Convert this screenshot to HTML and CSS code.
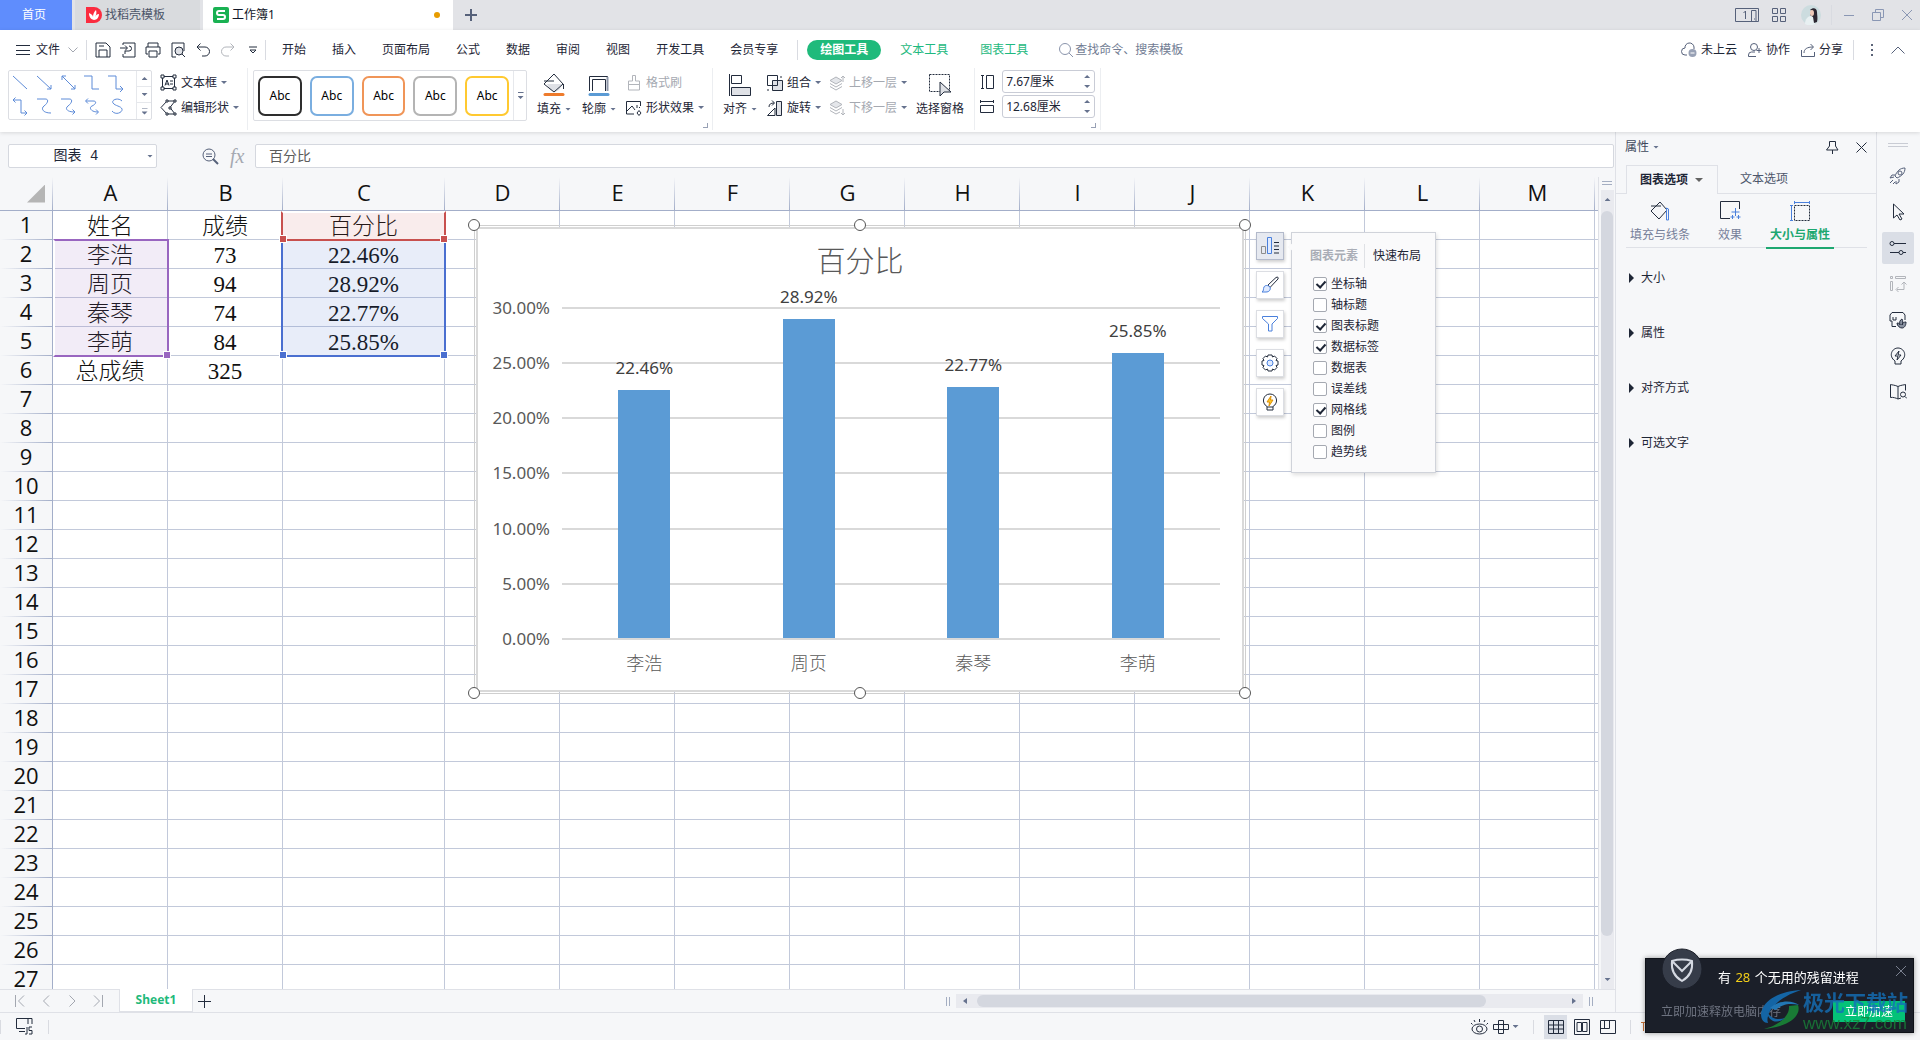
FILE: index.html
```html
<!DOCTYPE html>
<html lang="zh-CN">
<head>
<meta charset="utf-8">
<title>工作簿1</title>
<link rel="stylesheet" href="styles.css">
</head>
<body>
<header class="titlebar">
  <button class="home-tab">首页</button>
  <button class="doc-tab">
    <svg width="16" height="16" viewBox="0 0 16 16"><path d="M0 0h8a8 8 0 0 1 0 16H0z" fill="#fb2c3f"/><path d="M8 13C4 12 3 9 3 6c3 1 4 3 4 4 0-3 1-5 3-7 1 3 0 5-1 7 1-2 2-3 4-3 0 3-2 6-5 6z" fill="#fff"/></svg>
    找稻壳模板
  </button>
  <button class="doc-tab active">
    <svg width="16" height="16" viewBox="0 0 16 16"><rect width="16" height="16" rx="2" fill="#19b152"/><path d="M12 4H6a1.800 1.800 0 0 0 0 4h4a2 2 0 0 1 0 4H4" fill="none" stroke="#fff" stroke-width="2"/></svg>
    工作簿1<span class="unsaved"></span>
  </button>
  <button class="new-tab" aria-label="新建"><svg class="ico" width="12" height="12" viewBox="0 0 12 12"><path d="M6 0v12M0 6h12" stroke-width="2"/></svg></button>
  <div class="window-tools">
    <button aria-label="窗口"><svg class="ico" width="24" height="14" viewBox="0 0 24 14"><path d="M.5.5h23v13H.5zM16.500 2.500h4.500v11h-4.500zM8.500 5l2-2v8M19 11h1"/></svg></button>
    <button aria-label="应用"><svg class="ico" width="14" height="14" viewBox="0 0 14 14"><path d="M.5.5h5v5h-5zM8.500.5h5v5h-5zM.5 8.500h5v5h-5zM8.500 8.500h5v5h-5z"/></svg></button>
    <button aria-label="账户"><svg width="20" height="20" viewBox="0 0 20 20"><circle cx="10" cy="10" r="10" fill="#ccdcdf"/><path d="M4 19c0-5 3-8 6-8l3 2 1 6c-3 2-7 2-10 0z" fill="#e8f0f2"/><path d="M9 5c3-3 7-2 7 2 0 3 1 6 0 10l-3 1-1-6-3-2 3-4z" fill="#2c2630"/><ellipse cx="11" cy="8" rx="2" ry="3" fill="#eec9b8"/></svg></button>
    <i class="vline"></i>
    <button aria-label="最小化"><svg class="ico pale" width="10" height="12" viewBox="0 0 10 12"><path d="M0 6.500h10"/></svg></button>
    <button aria-label="还原"><svg class="ico pale" width="12" height="12" viewBox="0 0 12 12"><path d="M.5 3.500h8v8h-8zM3.500 3V.5h8v8H9"/></svg></button>
    <button aria-label="关闭"><svg class="ico pale" width="10" height="10" viewBox="0 0 10 10"><path d="M0 0l10 10M10 0L0 10"/></svg></button>
  </div>
</header>

<section class="ribbon">
  <nav class="menu">
    <button class="file"><svg class="ico dark" width="14" height="12" viewBox="0 0 14 12"><path d="M0 1.500h14M0 6.500h14M0 10.500h14"/></svg>文件<svg class="ico gray" width="10" height="6" viewBox="0 0 10 6"><path d="M.5.5L5 5 9.500.5"/></svg></button>
    <i class="vline"></i>
    <div class="quick">
      <button aria-label="保存"><svg class="ico dark" width="16" height="16" viewBox="0 0 16 16"><path d="M1 1h10l4 4v10H1zM4 15V8h8v7M4 4h5"/></svg></button>
      <button aria-label="输出PDF"><svg class="ico dark" width="16" height="16" viewBox="0 0 16 16"><path d="M3 3V1h12v14H3v-3M0 6h7M5 3.500L7.500 6 5 8.500M5 12V9h4a2.500 2.500 0 1 0 0-5"/></svg></button>
      <button aria-label="打印"><svg class="ico dark" width="16" height="16" viewBox="0 0 16 16"><path d="M3 5V1h10v4M3 12H1V5h14v7h-2M4 9h8v6H4z"/></svg></button>
      <button aria-label="打印预览"><svg class="ico dark" width="16" height="16" viewBox="0 0 16 16"><path d="M6 15H2V1h12v8"/><circle cx="9" cy="9" r="4" fill="#dfe1e6"/><path d="M12 12l3 3"/></svg></button>
      <button aria-label="撤销"><svg class="ico dark" width="14" height="14" viewBox="0 0 14 14"><path d="M4.500.5L1 4l3.500 3.500M1 4h8a4.500 4.500 0 0 1 0 9H6"/></svg></button>
      <button aria-label="恢复"><svg class="ico faint" width="14" height="14" viewBox="0 0 14 14"><path d="M9.500.5L13 4 9.500 7.500M13 4H5a4.500 4.500 0 0 0 0 9h3"/></svg></button>
      <button aria-label="自定义"><svg class="ico dark" width="8" height="8" viewBox="0 0 8 8"><path d="M0 1h8M1 4l3 3 3-3z"/></svg></button>
    </div>
    <i class="vline"></i>
    <div class="tabs">
      <button>开始</button><button>插入</button><button>页面布局</button><button>公式</button><button>数据</button><button>审阅</button><button>视图</button><button>开发工具</button><button>会员专享</button>
    </div>
    <i class="vline"></i>
    <div class="context-tabs">
      <button class="active">绘图工具</button><button>文本工具</button><button>图表工具</button>
    </div>
    <label class="search"><svg class="ico" width="14" height="14" viewBox="0 0 14 14"><circle cx="6" cy="6" r="5.500"/><path d="M10 10l4 4"/></svg><input type="text" placeholder="查找命令、搜索模板" aria-label="查找命令"></label>
    <div class="share">
      <button><svg class="ico" width="16" height="16" viewBox="0 0 16 16"><path d="M6 13H4a3.500 3.500 0 0 1 0-7 4.500 4.500 0 0 1 9-1v2"/><circle cx="11.500" cy="11" r="4" fill="#98a1b5" stroke="none"/><path d="M9.500 11h4" stroke="#fff"/></svg>未上云</button>
      <button><svg class="ico" width="14" height="14" viewBox="0 0 14 14"><circle cx="6" cy="4" r="3.500"/><path d="M8 13.500H.5V12a3 3 0 0 1 3-3H7M11 5v5M8.500 7.500h5"/></svg>协作</button>
      <button><svg class="ico" width="14" height="14" viewBox="0 0 14 14"><path d="M.5 7v6.500h13V9M3 10c0-4 3-6 9-6M9.500 1l3 3-3 3"/></svg>分享</button>
    </div>
    <i class="vline"></i>
    <button class="more" aria-label="更多"><svg width="3" height="14" viewBox="0 0 3 14"><path d="M0 1h2v2H0zM0 6h2v2H0zM0 11h2v2H0z" fill="#5b6478"/></svg></button>
    <button class="fold" aria-label="折叠"><svg class="ico" width="14" height="8" viewBox="0 0 14 8"><path d="M.5 7.500L7 1l6.500 6.500"/></svg></button>
  </nav>

  <div class="tools">
    <div class="group">
      <div class="gallery">
        <svg class="shapes" width="127" height="48" viewBox="0 0 127 48"><g fill="none" stroke="#5d8bd8">
          <path d="M4 5l14 13M28 5l14 13M42 14v4h-4M53 5l13 13M66 14v4h-4M53 9V5h4M75 5h8v13h7M99 5h8v13h7M111 15l3 3-3 3"/>
          <path d="M4 29h8v13h6M6.500 26.500L4 29l2.500 2.500M15.500 39.500L18 42l-2.500 2.500M28 28h8c5 0 2 5-1 7s-2 7 7 7M52 28h8c5 0 2 5-1 7s-2 6 7 6M63.500 38.500L66 41l-2.500 2.500M77 30h7c5 0 2 4-1 5s-2 6 6 6M79 27.500L76.500 30l2.500 2.500M87 38.500l2.500 2.500-2.500 2.500M113 30c-4-4-11-1-9 2s8 3 9 6-6 7-10 2"/></g></svg>
        <span class="gallery-nav"><button aria-label="上"><i class="caret up"></i></button><button aria-label="下"><i class="caret"></i></button><button aria-label="展开"><i class="caret bar"></i></button></span>
      </div>
      <div class="stack first">
        <button><svg class="ico dark" width="17" height="17" viewBox="0 0 17 17"><path d="M2.500 2.500h12v12h-12z"/><path d="M1 1h3v3H1zM13 1h3v3h-3zM1 13h3v3H1zM13 13h3v3h-3z" fill="#fff"/><path d="M5 11.500L7 6l2 5.500M5.500 10h3M10 7h3M10 10h3"/></svg>文本框<i class="caret"></i></button>
        <button><svg class="ico dark" width="17" height="17" viewBox="0 0 17 17"><path d="M7 2L1 8.500 7 15M7 2h8l-5 6.500 5 6.500H7"/><path d="M14 1h2v2h-2zM14 14h2v2h-2zM9 8h2v2H9zM6 1h2v2H6zM6 14h2v2H6z" fill="#fff"/></svg>编辑形状<i class="caret"></i></button>
      </div>
    </div>
    <div class="group styles-group">
      <div class="style-gallery">
        <button class="s-black">Abc</button><button class="s-blue">Abc</button><button class="s-orange">Abc</button><button class="s-gray">Abc</button><button class="s-yellow">Abc</button>
        <button class="expand" aria-label="展开"><i class="caret bar"></i></button>
      </div>
      <button class="big fill"><svg class="ico dark" width="24" height="24" viewBox="0 0 24 24"><path d="M5 11h16l-4 6-4 2-5-2z" fill="#dfe1e6" stroke="none"/><path d="M12 1l9 10-9 8-10-8zM2 8h10M21.500 11v5"/><path d="M3 21.500h18" stroke="#ee7b2c" stroke-width="3" stroke-linecap="round"/></svg><span>填充<i class="caret"></i></span></button>
      <button class="big"><svg class="ico dark" width="24" height="24" viewBox="0 0 24 24"><path d="M2.500 18V3.500h18V18M5.500 18V6.500h13V18"/><path d="M20.500 4v14" stroke="#8e96a8" stroke-width="2"/><path d="M3 21.500h18" stroke="#5b9bd5" stroke-width="3" stroke-linecap="round"/></svg><span>轮廓<i class="caret"></i></span></button>
      <div class="stack effects">
        <button disabled><svg class="ico faint" width="16" height="17" viewBox="0 0 16 17"><path d="M6.500 7V1.500h3V7h4v9h-11V7zM2.500 10.500h11"/></svg>格式刷</button>
        <button><svg class="ico dark" width="16" height="16" viewBox="0 0 16 16"><path d="M8 14H.5V1.500h14V6M1 11l5-5 3 4M11 13l2-2.500 2 2.500-2 2.500zM11 5v3M13 7l1 1"/></svg>形状效果<i class="caret"></i></button>
      </div>
      <i class="corner"></i>
    </div>
    <div class="group arrange">
      <button class="big"><svg class="ico dark" width="24" height="24" viewBox="0 0 24 24"><path d="M1.500 1v22M3.500 2.500h10v8h-10z"/><path d="M3.500 14.500h19v8h-19z" fill="#dfe1e6"/></svg><span>对齐<i class="caret"></i></span></button>
      <div class="stack two">
        <button><svg class="ico dark" width="16" height="16" viewBox="0 0 16 16"><path d="M5.500 5.500h10v10h-10z" fill="#dfe1e6"/><path d="M.5.5h10v10H.5zM14 1v2M1 14v2"/></svg>组合<i class="caret"></i></button>
        <button><svg class="ico dark" width="16" height="16" viewBox="0 0 16 16"><path d="M9.500 1.500h5v14h-5z" fill="#dfe1e6"/><path d="M8 8L.5 15.500H8zM2 7c0-3 2-4 5-4M5 .5L7.500 3 5 5.500"/></svg>旋转<i class="caret"></i></button>
      </div>
      <div class="stack layers">
        <button disabled><svg class="ico faint" width="16" height="16" viewBox="0 0 16 16"><path d="M7 2L1 5.500 7 9l6-3.500z" fill="#e4e6ea"/><path d="M1 8.500L7 12l6-3.500M1 11.500L7 15l6-3.500M14 7V1M12 3l2-2 2 2"/></svg>上移一层<i class="caret"></i></button>
        <button disabled><svg class="ico faint" width="16" height="16" viewBox="0 0 16 16"><path d="M7 1L1 4.500 7 8l6-3.500z" fill="#e4e6ea"/><path d="M1 7.500L7 11l6-3.500M1 10.500L7 14l4-2M14 9v6M12 13l2 2 2-2"/></svg>下移一层<i class="caret"></i></button>
      </div>
      <button class="big pane"><svg class="ico dark" width="24" height="24" viewBox="0 0 24 24"><path d="M1.500 1.500h20v17h-20z" stroke-dasharray="2 1"/><path d="M12 9v14l4-4h7z" fill="#dfe1e6"/></svg><span>选择窗格</span></button>
    </div>
    <div class="group sizes">
      <label><svg class="ico dark" width="14" height="14" viewBox="0 0 14 14"><path d="M1 .5h3M1 13.500h3M2.500.5v13M6.500.5h7v13h-7z"/></svg><span class="spin"><input type="text" value="7.67厘米" aria-label="高度"><span><i class="caret up"></i><i class="caret"></i></span></span></label>
      <label><svg class="ico dark" width="14" height="14" viewBox="0 0 14 14"><path d="M.5 0v3M13.500 0v3M0 1.500h14M.5 5.500h13v7H.5z"/></svg><span class="spin"><input type="text" value="12.68厘米" aria-label="宽度"><span><i class="caret up"></i><i class="caret"></i></span></span></label>
      <i class="corner"></i>
    </div>
  </div>
</section>

<main>
  <section class="workspace">
    <div class="formula-bar">
      <label class="name-box"><input type="text" value="图表 4" aria-label="名称"><i class="caret"></i></label>
      <svg class="ico" width="17" height="17" viewBox="0 0 17 17"><circle cx="7" cy="7" r="6"/><path d="M11 11l5 5" stroke-width="2"/><path d="M4 6h6M4 8.500h6"/></svg>
      <em class="fx">fx</em>
      <input class="formula" type="text" value="百分比" aria-label="编辑栏">
    </div>
    <div class="sheet-row">
      <div class="sheet">
        <table id="grid"></table>
        <div class="range purple"><i></i><i></i></div>
        <div class="range blue"><i></i><i></i></div>
        <div class="range red"><i></i><i></i></div>

        <div class="chart-frame">
          <div class="chart">
            <h2>百分比</h2>
            <div class="plot">
              <div class="axis"><span>30.00%</span><span>25.00%</span><span>20.00%</span><span>15.00%</span><span>10.00%</span><span>5.00%</span><span>0.00%</span></div>
              <div class="area">
                <div class="lines"><hr><hr><hr><hr><hr><hr><hr></div>
                <div class="bars">
                  <div><b>22.46%</b><i style="height:74.87%"></i></div>
                  <div><b>28.92%</b><i style="height:96.4%"></i></div>
                  <div><b>22.77%</b><i style="height:75.9%"></i></div>
                  <div><b>25.85%</b><i style="height:86.17%"></i></div>
                </div>
              </div>
            </div>
            <div class="cats"><span>李浩</span><span>周页</span><span>秦琴</span><span>李萌</span></div>
          </div>
          <i class="knob nw"></i><i class="knob n"></i><i class="knob ne"></i><i class="knob sw"></i><i class="knob s"></i><i class="knob se"></i>
        </div>

        <div class="chart-tools">
          <button class="on" aria-label="图表元素"><svg class="ico dark" width="18" height="18" viewBox="0 0 18 18"><path d="M.5 9.500h4v7h-4z" stroke="#8d8d8d"/><path d="M6.500.5h4v16h-4z" stroke="#4a80dc" fill="#dfeaff"/><path d="M13 5.500h5M13 9h5M13 12.500h5M13 16h5"/></svg></button>
          <button aria-label="样式"><svg class="ico dark" width="18" height="18" viewBox="0 0 18 18"><path d="M7 9l8-7.500c2-1 2.500 0 2 1.500L9 11.500z"/><path d="M1 16c2-1 1-3 2-5s4-2 6 0c1 3-1 5-4 5z" fill="#dfeaff" stroke="#4a80dc"/></svg></button>
          <button aria-label="筛选"><svg class="ico" width="18" height="18" viewBox="0 0 18 18"><path d="M1.500 1.500h15v2L11 9v7H7.500V9L1.500 3.500z" stroke="#4a80dc"/></svg></button>
          <button aria-label="设置"><svg class="ico dark" width="18" height="18" viewBox="0 0 18 18"><path d="M7 1h4l.5 2 2-1 2.500 2.500-1 2 2 .5v4l-2 .5 1 2-2.500 2.500-2-1-.5 2H7l-.5-2-2 1L2 13.500l1-2L1 11V7l2-.5-1-2L4.500 2l2 1z"/><circle cx="9" cy="9" r="3" stroke="#4a80dc" fill="#dfeaff"/></svg></button>
          <button aria-label="灵感"><svg class="ico dark" width="18" height="18" viewBox="0 0 18 18"><path d="M6 13.500C0 10 2 1 9 1s9 9 3 12.500V17H6zM6 14h6"/><path d="M10 3L6 9h2.500L8 13l4-6H9.500z" fill="#ffc928" stroke="#dd9008"/></svg></button>
        </div>

        <div class="popup">
          <div class="popup-tabs"><button class="muted">图表元素</button><button>快速布局</button></div>
          <label><input type="checkbox" checked>坐标轴</label>
          <label><input type="checkbox">轴标题</label>
          <label><input type="checkbox" checked>图表标题</label>
          <label><input type="checkbox" checked>数据标签</label>
          <label><input type="checkbox">数据表</label>
          <label><input type="checkbox">误差线</label>
          <label><input type="checkbox" checked>网格线</label>
          <label><input type="checkbox">图例</label>
          <label><input type="checkbox">趋势线</label>
        </div>
      </div>
      <div class="vscroll">
        <i class="grip"></i>
        <div class="track"><i class="caret up"></i><i class="thumb"></i><i class="caret"></i></div>
      </div>
    </div>
    <div class="sheet-tabs">
      <div class="pager">
        <button aria-label="首个"><svg class="ico gray" width="10" height="12" viewBox="0 0 10 12"><path d="M.5 0v12M9 .5L3.500 6 9 11.500"/></svg></button>
        <button aria-label="上一个"><svg class="ico gray" width="10" height="12" viewBox="0 0 10 12"><path d="M8 .5L2.500 6 8 11.500"/></svg></button>
        <button aria-label="下一个"><svg class="ico gray" width="10" height="12" viewBox="0 0 10 12"><path d="M2.500.5L8 6l-5.500 5.500"/></svg></button>
        <button aria-label="末个"><svg class="ico gray" width="10" height="12" viewBox="0 0 10 12"><path d="M9.500 0v12M1 .5L6.500 6 1 11.500"/></svg></button>
      </div>
      <button class="sheet-tab">Sheet1</button>
      <button class="add" aria-label="新工作表"><svg class="ico dark" width="13" height="13" viewBox="0 0 13 13"><path d="M6.500 0v13M0 6.500h13"/></svg></button>
      <div class="hscroll"><i class="grip"></i><div class="track"><i class="caret left"></i><i class="thumb"></i><i class="caret right"></i></div><i class="grip"></i></div>
    </div>
  </section>

  <aside class="panel">
    <div class="panel-head"><button>属性<i class="caret"></i></button>
      <button class="pin" aria-label="固定"><svg class="ico dark" width="13" height="13" viewBox="0 0 13 13"><path d="M3.500.5h6V5l2.500 4H.5L3.500 5zM6.500 9v4"/></svg></button>
      <button aria-label="关闭"><svg class="ico dark" width="11" height="11" viewBox="0 0 11 11"><path d="M.5.5l10 10M10.500.5l-10 10"/></svg></button></div>
    <div class="panel-tabs"><button class="active">图表选项<i class="caret wide"></i></button><button>文本选项</button></div>
    <div class="sub-tabs">
      <button><svg class="ico dark" width="22" height="22" viewBox="0 0 22 22"><path d="M11 2l7 8-8 9-8-8zM2 6h10"/><path d="M17.500 8v12h2V9z" stroke="#4a80dc"/></svg>填充与线条</button>
      <button><svg class="ico dark" width="22" height="22" viewBox="0 0 22 22"><path d="M11 18.500H1.500v-17h19V9"/><path d="M16.500 8v8M12.500 12h8M13.500 15v4M11.500 17h4M19.500 15v4M17.500 17h4" stroke="#4a80dc"/></svg>效果</button>
      <button class="active"><svg class="ico dark" width="22" height="22" viewBox="0 0 22 22"><path d="M5.500 5.500h15v15h-15z" stroke-dasharray="2 1"/><path d="M5.500 1v3M20.500 1v3M5.500 2.500h15M1 5.500h3M1 20.500h3M2.500 5.500v15" stroke="#4a80dc"/></svg>大小与属性</button>
    </div>
    <div class="sections"><button>大小</button><button>属性</button><button>对齐方式</button><button>可选文字</button></div>
  </aside>

  <aside class="rail">
    <i class="grip"></i>
    <button aria-label="快捷"><svg class="ico" width="18" height="18" viewBox="0 0 18 18"><path d="M6 9c2-5 5-8 10-8 0 5-3 8-8 10zM6 8H3L1 11l4-1M10 12v3l-3 2v-3M1 16l3-3M4 17l2-2"/><circle cx="11" cy="6" r="2"/></svg></button>
    <button aria-label="选择"><svg class="ico dark" width="18" height="18" viewBox="0 0 18 18"><path d="M4.500 1v14l3.500-3 3 5 2-1-3-5h5z"/></svg></button>
    <button class="on" aria-label="属性"><svg class="ico dark" width="18" height="18" viewBox="0 0 18 18"><circle cx="3" cy="4.500" r="2"/><circle cx="12" cy="13.500" r="2"/><path d="M5 4.500h12M1 13.500h9M14 13.500h3"/></svg></button>
    <button aria-label="透视"><svg class="ico faint" width="18" height="18" viewBox="0 0 18 18"><path d="M1.500 1.500h2v2h-2zM6.500 1.500h10v2h-10zM1.500 6.500h2v9h-2zM8 14.500h7V7M12.500 9.500L15 7l2.500 2.500M9.500 12L7 14.500 9.500 17"/></svg></button>
    <button aria-label="素材"><svg class="ico dark" width="18" height="18" viewBox="0 0 18 18"><path d="M7 15.500H3V10H1V4l2-2.500h11L16 4v5M4 6v3h3V6"/><path d="M8 12c2 0 3 1 3 2-1-3 0-5 2-6 1 2 1 4 0 6 0-2 2-3 4-3 0 4-2 6-4 6s-5-2-5-5z" fill="#8b93a2"/></svg></button>
    <button aria-label="灵感"><svg class="ico dark" width="18" height="18" viewBox="0 0 18 18"><path d="M6 14C-1 9 3 1 9 1s10 8 3 13v3H6zM10 4L6 9h3l-1 4 4-5H9z"/></svg></button>
    <button aria-label="查阅"><svg class="ico dark" width="18" height="18" viewBox="0 0 18 18"><path d="M9 3.500C6 2 3 2 1.500 1.500v13C4 14 7 15 9 16zM9 3.500c3-1.500 6-1.500 7.500-2v6M9 16l3-1"/><circle cx="14" cy="11.500" r="2.500"/><path d="M16 13.500l2 2"/></svg></button>
  </aside>
</main>

<footer class="status">
  <i class="vline"></i>
  <button aria-label="宏"><svg class="ico dark" width="17" height="17" viewBox="0 0 17 17"><path d="M9 10.500H.5v-10h12M3 13.500h6M12 6V.5h4V6M9 16h2V9M16 9h-3v3.500h3V16h-3"/></svg></button>
  <i class="vline"></i>
  <div class="views">
    <button class="eye" aria-label="护眼"><svg class="ico dark" width="17" height="16" viewBox="0 0 17 16"><ellipse cx="8.500" cy="10" rx="7.500" ry="5"/><circle cx="8.500" cy="10" r="3"/><path d="M8.500 0v3M3 1l1 2M14 1l-1 2M0 4l1.500 1.500M17 4l-1.500 1.500"/></svg></button>
    <button class="read" aria-label="阅读"><svg class="ico dark" width="16" height="16" viewBox="0 0 16 16"><path d="M5.500 1.500h5v13h-5zM.5 5.500h15v5H.5z"/></svg><i class="caret"></i></button>
    <i class="vline"></i>
    <button class="on" aria-label="普通"><svg class="ico dark" width="16" height="14" viewBox="0 0 16 14"><path d="M.5.5h15v13H.5zM.5 5h15M.5 9h15M5.500.5v13M10.500.5v13"/></svg></button>
    <button aria-label="分页"><svg class="ico dark" width="16" height="16" viewBox="0 0 16 16"><path d="M.5.5h15v15H.5zM3 3.500h4.500v9H3zM8.500 3.500H13v9H8.500z"/></svg></button>
    <button aria-label="版面"><svg class="ico dark" width="16" height="14" viewBox="0 0 16 14"><path d="M.5.5h15v13H.5zM.5 8.500h9V.5M4.500.5v8"/></svg></button>
    <i class="vline end"></i>
    <svg width="16" height="12" viewBox="0 0 16 12"><path d="M0 1.500h8M2.500 1v9" stroke="#c8743a" fill="none"/></svg>
  </div>
</footer>

<div class="toast">
  <svg class="shield" width="42" height="42" viewBox="0 0 42 42"><circle cx="21" cy="21" r="20" fill="#363c49" stroke="#1b1f29"/><path d="M11 13c7-2 13-2 20 0 1 9-3 16-10 20-7-4-11-11-10-20zM12 14l9 9 9-9" fill="none" stroke="#d5d9e2" stroke-width="2"/></svg>
  <p class="toast-title">有 <b>28</b> 个无用的残留进程</p>
  <button class="toast-close" aria-label="关闭"><svg width="10" height="10" viewBox="0 0 10 10"><path d="M0 0l10 10M10 0L0 10" stroke="#7b8190"/></svg></button>
  <div class="toast-row"><span>立即加速释放电脑内存</span><button>立即加速</button></div>
  <div class="watermark">
    <svg width="44" height="42" viewBox="0 0 44 42"><path d="M42 1C23 2 4 10 2 25c0 6 3 9 7 9C6 22 20 8 42 1z" fill="#1465a5"/><path d="M11 19c9-8 22-8 29-3-9-2-17-1-23 5z" fill="#2276b4"/><path d="M39 16c4 11-10 22-34 24 13-3 26-12 25-23z" fill="#197a35"/><path d="M8 23c5 8 12 8 18 6-8 7-17 3-18-6z" fill="#1465a5"/></svg>
    <p><strong>极光下载站</strong><span>www.xz7.com</span></p>
  </div>
</div>
<script src="script.js"></script>
</body>
</html>
```
FILE: styles.css
```css
* { box-sizing: border-box; }
body {
  margin: 0; height: 100vh; display: flex; flex-direction: column; overflow: hidden;
  font: 12px/20px "Noto Sans", "Noto Sans CJK SC", sans-serif;
  color: #1e2636; background: #f6f7f9;
}
button, input { font: inherit; color: inherit; border: 0; background: none; padding: 0; margin: 0; min-width: 0; outline: 0; }
button { display: flex; align-items: center; white-space: nowrap; }
p, h2, hr { margin: 0; }
svg { flex: none; display: block; }
.ico { fill: none; stroke: #56617a; }
.ico.dark { stroke: #232c3d; }
.ico.gray { stroke: #a3a7b0; }
.ico.faint { stroke: #b2b5bb; }
.ico.pale { stroke: #8a97b4; }
.vline { flex: none; width: 1px; height: 20px; background: #d9dbe1; }
.caret { flex: none; width: 6px; height: 3px; margin-right: -1px; background: #66728e; clip-path: polygon(0 0, 100% 0, 50% 100%); }
.caret.up { clip-path: polygon(50% 0, 100% 100%, 0 100%); }
.caret.left, .caret.right { width: 4px; height: 6px; margin: 0; clip-path: polygon(100% 0, 100% 100%, 0 50%); }
.caret.right { clip-path: polygon(0 0, 0 100%, 100% 50%); }
.caret.wide { width: 8px; height: 4px; }
.caret.bar { height: 7px; clip-path: polygon(0 0, 100% 0, 100% 1px, 0 1px, 0 4px, 100% 4px, 50% 7px, 0 4px); }

/* title bar */
.titlebar { flex: none; height: 30px; display: flex; background: #e2e3e7; }
.home-tab { width: 72px; padding-right: 4px; justify-content: center; background: #5f8dfd; color: #fff; margin-right: 3px; }
.doc-tab { width: 125px; gap: 3px; padding-left: 11px; background: #d9dbde; color: #4b5468; margin-right: 3px; }
.doc-tab.active { width: 250px; padding-left: 10px; margin: 0; background: #fff; color: #111827; }
.unsaved { width: 6px; height: 6px; border-radius: 3px; background: #e79c00; margin: 0 13px 0 auto; }
.new-tab { margin-left: 12px; }
.window-tools { margin-left: auto; display: flex; align-items: center; padding-right: 8px; }
.window-tools button { margin-right: 13px; }
.window-tools button:nth-child(2) { margin-right: 15px; }
.window-tools button:nth-child(3) { margin-right: 10px; }
.window-tools .vline { margin-right: 12px; }
.window-tools button:nth-last-child(-n+3) { margin-right: 18px; }
.window-tools button:last-child { margin-right: 0; }

/* ribbon */
.ribbon { flex: none; background: #fff; box-shadow: 0 1px 4px #00000020; position: relative; z-index: 1; }
.menu { display: flex; align-items: center; height: 38px; padding: 2px 15px 0 16px; }
.file { gap: 6px; }
.file .gray { margin-left: 2px; }
.file + .vline { margin: 0 3px 0 8px; }
.quick { display: flex; }
.quick button { width: 25px; height: 20px; justify-content: center; }
.quick + .vline { margin-right: 16px; }
.tabs { display: flex; gap: 26px; margin-right: 19px; }
.context-tabs { display: flex; margin-left: 9px; color: #1eb980; }
.context-tabs button { padding: 0 16px; }
.context-tabs button.active { width: 74px; padding: 0 13px; height: 20px; border-radius: 10px; background: #1fba7b; color: #fff; font-weight: bold; margin-right: 3px; }
.search { display: flex; align-items: center; gap: 2px; margin-left: 15px; }
.search svg { stroke: #8a94ab; }
.search input { width: 120px; }
.search input::placeholder { color: #717c93; opacity: 1; }
.share { display: flex; gap: 11px; margin: 0 10px 0 auto; }
.share button { gap: 4px; }
.more { margin: 0 17px; }
.tools { display: flex; height: 64px; }
.group { display: flex; position: relative; height: 62px; padding: 2px 9px 0 8px; border-right: 1px solid #eceef1; }
.gallery { display: flex; width: 144px; height: 50px; border: 1px solid #dcdee3; border-radius: 2px; }
.gallery-nav { width: 16px; border-left: 1px solid #e6e8ec; }
.gallery-nav button { width: 100%; height: 16px; justify-content: center; border-bottom: 1px solid #e6e8ec; }
.gallery-nav button:last-child { border: 0; }
.stack { display: flex; flex-direction: column; }
.stack button { height: 25px; gap: 4px; }
button:disabled { color: #a5a9b1; }
.stack.first { margin-left: 8px; }
.styles-group { padding-left: 5px; }
.style-gallery { display: flex; width: 274px; height: 51px; border: 1px solid #dcdee3; border-radius: 2px; padding: 0 0 0 4px; align-items: center; gap: 8px; }
.style-gallery button { justify-content: center; width: 44px; height: 40px; border: 2px solid; border-radius: 7px; color: #000; }
.style-gallery .s-black { border-color: #2e2e2e; }
.style-gallery .s-blue { border-color: #7aaee0; }
.style-gallery .s-orange { border-color: #f09558; }
.style-gallery .s-gray { border-color: #b4b4b4; }
.style-gallery .s-yellow { border-color: #ffc930; }
.style-gallery .expand { width: 13px; height: 100%; border: 0; border-left: 1px solid #e6e8ec; border-radius: 0; margin-left: -4px; }
.big { flex-direction: column; gap: 2px; padding-top: 3px; height: 50px; }
.big span { display: flex; align-items: center; gap: 4px; }
.big.fill { margin: 0 12px 0 10px; }
.effects { margin-left: 11px; }
.corner { position: absolute; right: 4px; bottom: 2px; width: 5px; height: 5px; border: solid #98a1b5; border-width: 0 1px 1px 0; }
.arrange { padding: 2px 10px 0; }
.two { margin: 0 9px 0 11px; }
.pane { margin-left: 10px; }
.sizes { flex-direction: column; gap: 2px; padding: 2px 5px 0; }
.sizes label { display: flex; align-items: center; gap: 8px; }
.spin { display: flex; align-items: center; width: 93px; height: 23px; border: 1px solid #c9ccd6; border-radius: 3px; padding: 0 5px 0 3px; }
.spin input { flex: 1; }
.spin > span { display: grid; gap: 7px; }

/* workspace */
main { flex: 1; min-height: 0; display: flex; }
.workspace { flex: 1; min-width: 0; display: flex; flex-direction: column; }
.formula-bar { flex: none; height: 45px; display: flex; align-items: center; padding: 3px 1px 0 8px; }
.name-box { display: flex; align-items: center; width: 149px; height: 24px; padding-right: 4px; background: #fff; border: 1px solid #d5d8df; border-radius: 2px; margin-right: 45px; }
.name-box input { flex: 1; text-align: center; font: 14px/20px "Liberation Mono", "Noto Sans CJK SC", monospace; padding-right: 4px; }
.fx { width: 24px; margin: 0 1px 0 11px; color: #a5a9b1; font: italic 20px/20px "Liberation Serif", serif; }
.formula { flex: 1; height: 24px; padding: 0 13px 3px; background: #fff; border: 1px solid #d5d8df; border-radius: 2px; color: #5c5c5c; font-size: 14px; }
.sheet-row { flex: 1; min-height: 0; display: flex; }
.sheet { flex: 1; min-width: 0; position: relative; overflow: hidden; background: #fff; border-right: 1px solid #dfe1e7; }
#grid { table-layout: fixed; border-collapse: separate; border-spacing: 0; width: 0; }
#grid th { font: 22px/24px "Open Sans", "Noto Sans", sans-serif; color: #111; padding: 0 0 3px; background: #f6f7f9; }
#grid thead th { height: 34px; border-bottom: 1px solid #a3aec9; background: linear-gradient(#a3aec900, #a3aec9) right / 1px 100% no-repeat #f6f7f9; }
#grid tbody th { height: 29px; border-right: 1px solid #a3aec9; background: linear-gradient(90deg, #a3aec900, #a3aec9) bottom / 100% 1px no-repeat #f6f7f9; }
#grid td { height: 29px; padding: 4px 0 0; border: solid #c2c9da; border-width: 0 1px 1px 0; text-align: center; font: 300 23px/24px "Liberation Serif", "Noto Sans CJK SC", serif; color: #111; white-space: nowrap; overflow: hidden; }
#grid .corner-mark { width: 18px; height: 18px; margin: 3px 0 0 27px; background: #b5b5b5; clip-path: polygon(100% 0, 100% 100%, 0 100%); }
.range { position: absolute; border: 2px solid; }
.range i { position: absolute; width: 6px; height: 6px; bottom: -3px; background: currentColor; outline: 1px solid #fff; }
.range i:first-child { left: -3px; }
.range i:last-child { right: -3px; }
.purple { left: 53px; top: 62px; width: 116px; height: 118px; color: #9966c0; background: #9966c020; border-left-color: #fff; }
.purple i:first-child { display: none; }
.blue { left: 281px; top: 62px; width: 165px; height: 118px; color: #4a6fd0; background: #4a6fd020; }
.red { left: 281px; top: 34px; width: 165px; height: 30px; color: #c8504e; background: #c8504e1c; border-top-color: #fff; }

/* chart */
.chart-frame { position: absolute; left: 474px; top: 48px; width: 772px; height: 469px; padding: 1px; border: 1px solid #cfcfcf; }
.chart { height: 100%; background: #fff; border: 2px solid #d9d9d9; padding: 15px 22px 0 0; color: #595959; }
.chart h2 { font: 300 29px/30px "Noto Sans CJK SC", sans-serif; text-align: center; padding-left: 22px; margin-bottom: 33px; }
.plot { display: flex; gap: 12px; height: 333px; font-size: 17px; }
.axis { width: 72px; display: flex; flex-direction: column; justify-content: space-between; text-align: right; }
.axis span { height: 2px; line-height: 2px; }
.area { flex: 1; display: grid; }
.lines { grid-area: 1 / 1; display: flex; flex-direction: column; justify-content: space-between; }
.lines hr { border: 0; height: 2px; background: #d9d9d9; }
.bars { grid-area: 1 / 1; display: grid; grid-template-columns: repeat(4, 1fr); height: 331px; z-index: 1; }
.bars div { display: flex; flex-direction: column; justify-content: flex-end; align-items: center; }
.bars b { font-weight: normal; color: #404040; margin-bottom: 12px; }
.bars i { flex: none; width: 52px; background: #5b9bd5; }
.cats { display: grid; grid-template-columns: repeat(4, 1fr); margin: 10px 0 0 84px; font: 300 18px/24px "Noto Sans CJK SC", sans-serif; text-align: center; }
.knob { position: absolute; width: 12px; height: 12px; border: 1px solid #555; border-radius: 6px; background: #fff; }
.nw, .n, .ne { top: -7px; }
.sw, .s, .se { bottom: -6px; }
.nw, .sw { left: -7px; }
.n, .s { left: 379px; }
.ne, .se { right: -6px; }
.chart-tools { position: absolute; left: 1256px; top: 55px; display: grid; gap: 11px; }
.chart-tools button { width: 28px; height: 28px; justify-content: center; background: #fff; border: 1px solid #dcdee3; box-shadow: 1px 2px 3px #00000030; }
.chart-tools .on { background: #e6e9f0; border-color: #b3bacb; }
.popup { position: absolute; left: 1291px; top: 55px; width: 145px; height: 241px; padding: 11px 0 0 21px; background: #fafafb; border: 1px solid #d0d3da; box-shadow: 1px 2px 4px #00000020; }
.popup::before { content: ""; position: absolute; left: -5px; top: 10px; width: 6px; height: 8px; background: #fafafb; clip-path: polygon(100% 0, 100% 100%, 0 50%); }
.popup-tabs { display: flex; height: 24px; margin: 0 0 5px -3px; }
.popup-tabs .muted { color: #a9adb6; width: 55px; border-right: 1px solid #dfe1e5; margin-right: 8px; font-weight: bold; }
.popup label { display: flex; align-items: center; gap: 4px; height: 21px; }
input[type=checkbox] { appearance: none; position: relative; width: 14px; height: 14px; background: #fff; border: 1px solid #a5a9b1; border-radius: 2px; }
input[type=checkbox]:checked::after { content: ""; position: absolute; left: 4px; top: 1px; width: 4px; height: 7px; border: solid #1e2636; border-width: 0 2px 2px 0; transform: rotate(42deg); }

/* scroll bars */
.grip { flex: none; width: 10px; height: 4px; border: solid #a4aec2; border-width: 1px 0; }
.vscroll { width: 16px; display: flex; flex-direction: column; align-items: center; padding-top: 4px; }
.vscroll .track { flex: 1; width: 13px; margin-top: 5px; padding: 8px 0; display: flex; flex-direction: column; align-items: center; background: #e9eaef; }
.vscroll .thumb { width: 12px; flex: 1; margin: 10px 0 42px; border-radius: 6px; background: #d4d7df; }
.sheet-tabs { flex: none; height: 23px; display: flex; align-items: center; border-top: 1px solid #dfe1e7; }
.pager { display: flex; gap: 16px; padding: 0 16px 0 15px; }
.pager + .sheet-tab { align-self: stretch; width: 74px; margin-top: -1px; justify-content: center; background: #fff; border: 1px solid #dfe1e7; border-top: 0; color: #1fba7b; font-weight: bold; }
.add { margin-left: 5px; }
.hscroll { display: flex; align-items: center; margin-left: auto; width: 42%; max-width: 669px; padding-right: 22px; }
.hscroll .grip { width: 4px; height: 9px; border-width: 0 1px; }
.hscroll .track { flex: 1; display: flex; align-items: center; height: 14px; margin: 0 6px 0 6px; padding: 0 7px; background: #e9eaef; }
.hscroll .thumb { flex: 1; height: 12px; margin: 0 86px 0 10px; border-radius: 6px; background: #d4d7df; }

/* property panel */
.panel { flex: none; width: 261px; border-left: 1px solid #dfe1e7; }
.panel-head { display: flex; align-items: center; height: 33px; padding: 0 9px 3px; color: #3e475b; }
.panel-head button:first-child { gap: 4px; }
.panel-head .pin { margin: 0 12px 0 auto; }
.panel-head button:last-child { width: 20px; justify-content: center; margin-right: -4px; }
.panel-tabs { display: flex; height: 29px; padding-left: 10px; border-bottom: 1px solid #dfe1e7; color: #4d566b; }
.panel-tabs button { padding: 0 22px; }
.panel-tabs .active { width: 92px; gap: 7px; padding: 0 13px; border: 1px solid #dfe1e7; border-bottom: 0; background: #f6f7f9; color: #1e2636; font-weight: bold; height: 29px; }
.panel-tabs .caret { background: #636363; }
.sub-tabs { display: flex; height: 54px; margin: 0 9px 0 10px; border-bottom: 1px solid #dfe1e7; color: #76809a; }
.sub-tabs button { flex-direction: column; padding: 6px 4px 0; gap: 3px; height: 55px; border-bottom: 2px solid transparent; }
.sub-tabs button:nth-child(2) { margin: 0 20px; }
.sub-tabs .active { color: #1ea871; border-color: #1ea871; font-weight: bold; }
.sections { display: grid; gap: 35px; padding: 20px 0 0 13px; }
.sections button { gap: 7px; }
.sections button::before { content: ""; width: 5px; height: 10px; background: #1e2636; clip-path: polygon(0 0, 100% 50%, 0 100%); }
.rail { flex: none; width: 44px; border-left: 1px solid #dfe1e7; display: flex; flex-direction: column; align-items: center; gap: 4px; padding: 11px 1px 0 0; }
.rail .grip { width: 20px; border-color: #c9ccd4; margin-bottom: 9px; }
.rail button { width: 32px; height: 32px; justify-content: center; border-radius: 2px; }
.rail .on { background: #dadee6; }

/* status bar */
.status { flex: none; height: 28px; display: flex; align-items: center; border-top: 1px solid #dfe1e7; }
.status .vline { height: 14px; }
.status > button { margin: 0 15px; }
.views { display: flex; align-items: center; margin: 0 263px 0 auto; }
.views button { height: 24px; justify-content: center; margin-right: 3px; width: 23px; }
.views .read { width: 28px; gap: 4px; margin-right: 12px; }
.views .eye { margin-right: 0; }
.views .on { background: #dadee6; }
.views .vline { margin: 0 10px 0 2px; }
.views .end { margin-left: 8px; }

/* toast */
.toast { position: fixed; right: 6px; bottom: 7px; width: 269px; height: 75px; z-index: 3; background: #1b1f29; border: 1px solid #0e1118; box-shadow: 0 0 5px #0006; color: #fff; }
.shield { position: absolute; left: 15px; top: -11px; }
.toast-title { font-size: 13px; padding: 8px 0 0 72px; }
.toast-title b { font-weight: normal; color: #f3cf19; margin: 0 1px; }
.toast-close { position: absolute; right: 7px; top: 7px; }
.toast-row { display: flex; align-items: center; justify-content: space-between; margin: 14px 8px 0 15px; color: #6e7380; }
.toast-row button { width: 72px; height: 21px; justify-content: center; background: #04c278; color: #fff; }
.watermark { position: absolute; left: 113px; top: 30px; display: flex; pointer-events: none; }
.watermark p { margin-top: 1px; }
.watermark strong, .watermark span { display: block; opacity: .8; }
.watermark strong { font-size: 21px; line-height: 24px; color: #1470b8; }
.watermark span { font: 17px/20px "Liberation Sans", sans-serif; color: #188238; }
```
FILE: script.js
```js
const data = {
  1: ["姓名", "成绩", "百分比"],
  2: ["李浩", "73", "22.46%"],
  3: ["周页", "94", "28.92%"],
  4: ["秦琴", "74", "22.77%"],
  5: ["李萌", "84", "25.85%"],
  6: ["总成绩", "325"]
};
const letters = "ABCDEFGHIJKLMNOPQRSTUVWXYZ".split("");
const grid = document.getElementById("grid");

// Fills the visible sheet area with rows and columns; a column that only
// shows its edge keeps an empty heading.
function build() {
  const sheet = grid.parentElement;
  const widths = [53];
  const heads = [];
  let x = 53;
  for (const letter of letters) {
    if (x >= sheet.clientWidth) break;
    const w = letter === "C" ? 162 : 115;
    heads.push(x + w / 2 < sheet.clientWidth ? letter : "");
    widths.push(w);
    x += w;
  }
  const rows = Math.ceil((sheet.clientHeight - 34) / 29);
  let html = "<colgroup>" + widths.map(w => `<col style="width:${w}px">`).join("") + "</colgroup>";
  html += '<thead><tr><th><div class="corner-mark"></div></th>' + heads.map(h => `<th scope="col">${h}</th>`).join("") + "</tr></thead><tbody>";
  for (let r = 1; r <= rows; r++) {
    const row = data[r] || [];
    html += `<tr><th scope="row">${r}</th>` + heads.map((h, i) => `<td>${row[i] || ""}</td>`).join("") + "</tr>";
  }
  grid.style.width = x + "px";
  grid.innerHTML = html + "</tbody>";
}
build();
window.addEventListener("resize", build);
```
